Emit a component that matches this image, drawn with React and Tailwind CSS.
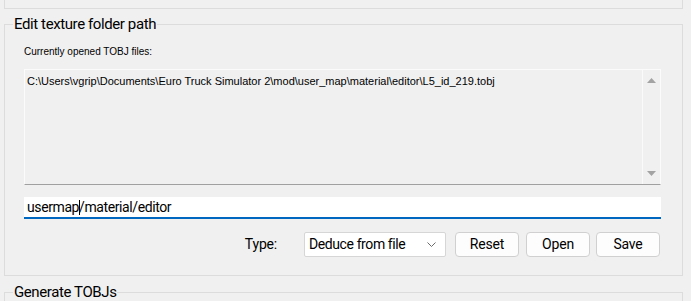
import React from 'react';

const ui = "font-['Roboto','Noto_Sans',sans-serif]";
const small = "font-['Liberation_Sans','Arial',sans-serif]";

function Group({ title, className, children }) {
  return (
    <div className={`relative mx-[4px] w-[679px] border border-[#dcdcdc] ${className}`}>
      {title && (
        <span
          className={`absolute left-[8px] top-[-11px] bg-[#f0f0f0] px-[1px] text-[15px] leading-[20px] tracking-[-0.4px] text-black ${ui}`}
        >
          {title}
        </span>
      )}
      {children}
    </div>
  );
}

function ScrollArrows() {
  return (
    <div className="flex h-full w-[18px] flex-col items-center justify-between border-l border-[#fafafa] py-[8px]">
      <svg width="9" height="5" viewBox="0 0 9 5">
        <path d="M0 5 L4.5 0 L9 5 Z" fill="#a3a3a3" />
      </svg>
      <svg width="9" height="5" viewBox="0 0 9 5">
        <path d="M0 0 L4.5 5 L9 0 Z" fill="#a3a3a3" />
      </svg>
    </div>
  );
}

export default function App() {
  return (
    <div className="h-[301px] w-[691px] overflow-hidden bg-[#f0f0f0]">
      {/* previous group, only its bottom shows */}
      <div className="mx-[4px] h-[9px] w-[679px] border-x border-b border-[#dcdcdc]" />

      <Group title="Edit texture folder path" className="mt-[15px] h-[252px]">
        <div className="pl-[19px] pt-[20px]">
          <div className={`text-[10px] leading-[13px] text-black ${small}`}>
            Currently opened TOBJ files:
          </div>

          {/* read-only file list */}
          <div className="mt-[11px] flex h-[116px] w-[637px] border border-[#fbfbfb] border-b-[#a0a0a0] bg-[#f0f0f0]">
            <div className={`flex-1 px-[2px] pt-[4px] text-[11px] leading-[14px] text-black ${small}`}>
              C:\Users\vgrip\Documents\Euro Truck Simulator 2\mod\user_map\material\editor\L5_id_219.tobj
            </div>
            <ScrollArrows />
          </div>

          {/* path input */}
          <div className="mt-[12px] flex h-[22px] w-[637px] items-center border-b-2 border-[#0067c0] bg-white pl-[3px]">
            <span className={`text-[14px] leading-[20px] tracking-[-0.4px] text-black ${ui}`}>
              usermap
              <span className="mx-[-0.5px] inline-block h-[15px] w-[1px] translate-y-[3px] bg-black" />
              /material/editor
            </span>
          </div>

          {/* type + actions */}
          <div className={`mt-[13px] flex h-[25px] w-[636px] items-center justify-end text-[14px] tracking-[-0.2px] text-black ${ui}`}>
            <span className="mr-[27px]">Type:</span>
            <div className="flex h-[25px] w-[142px] items-center justify-between rounded-[2px] border border-[#d6d6d6] bg-white pl-[4px] pr-[9px]">
              <span className="tracking-[-0.4px]">Deduce from file</span>
              <svg width="9" height="5" viewBox="0 0 9 5">
                <path d="M0.5 0.5 L4.5 4.5 L8.5 0.5" fill="none" stroke="#6b6b6b" strokeWidth="1" />
              </svg>
            </div>
            <button className="ml-[9px] h-[25px] w-[64px] rounded-[4px] border border-[#d0d0d0] bg-[#fdfdfd]">
              Reset
            </button>
            <button className="ml-[7px] h-[25px] w-[64px] rounded-[4px] border border-[#d0d0d0] bg-[#fdfdfd]">
              Open
            </button>
            <button className="ml-[6px] h-[25px] w-[64px] rounded-[4px] border border-[#d0d0d0] bg-[#fdfdfd]">
              Save
            </button>
          </div>
        </div>
      </Group>

      <Group title="Generate TOBJs" className="mt-[16px] h-[40px] border-b-0" />
    </div>
  );
}
